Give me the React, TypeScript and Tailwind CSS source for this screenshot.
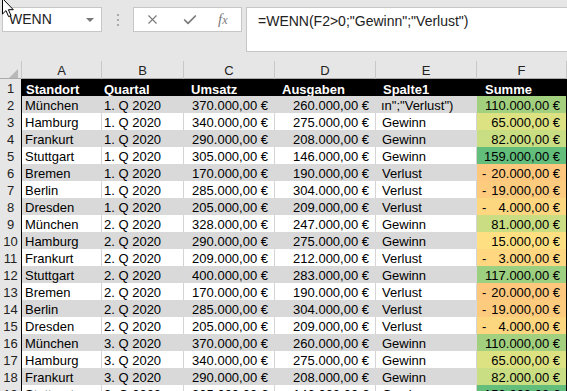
import React from "react";
import { X, Check } from "lucide-react";

type Row = {
  ort: string;
  q: string;
  umsatz: string;
  ausgaben: string;
  spalte: string;
  summe: string;
  neg?: boolean;
  color: string;
};

const rows: Row[] = [
  { ort: "München", q: "1. Q 2020", umsatz: "370.000,00 €", ausgaben: "260.000,00 €", spalte: "ın\";\"Verlust\")", summe: "110.000,00 €", color: "bg-[#a2d07f]" },
  { ort: "Hamburg", q: "1. Q 2020", umsatz: "340.000,00 €", ausgaben: "275.000,00 €", spalte: "Gewinn", summe: "65.000,00 €", color: "bg-[#dce182]" },
  { ort: "Frankurt", q: "1. Q 2020", umsatz: "290.000,00 €", ausgaben: "208.000,00 €", spalte: "Gewinn", summe: "82.000,00 €", color: "bg-[#c9dd82]" },
  { ort: "Stuttgart", q: "1. Q 2020", umsatz: "305.000,00 €", ausgaben: "146.000,00 €", spalte: "Gewinn", summe: "159.000,00 €", color: "bg-[#63be7b]" },
  { ort: "Bremen", q: "1. Q 2020", umsatz: "170.000,00 €", ausgaben: "190.000,00 €", spalte: "Verlust", summe: "20.000,00 €", neg: true, color: "bg-[#fdc87d]" },
  { ort: "Berlin", q: "1. Q 2020", umsatz: "285.000,00 €", ausgaben: "304.000,00 €", spalte: "Verlust", summe: "19.000,00 €", neg: true, color: "bg-[#fdcb7e]" },
  { ort: "Dresden", q: "1. Q 2020", umsatz: "205.000,00 €", ausgaben: "209.000,00 €", spalte: "Verlust", summe: "4.000,00 €", neg: true, color: "bg-[#fdd680]" },
  { ort: "München", q: "2. Q 2020", umsatz: "328.000,00 €", ausgaben: "247.000,00 €", spalte: "Gewinn", summe: "81.000,00 €", color: "bg-[#cadd82]" },
  { ort: "Hamburg", q: "2. Q 2020", umsatz: "290.000,00 €", ausgaben: "275.000,00 €", spalte: "Gewinn", summe: "15.000,00 €", color: "bg-[#fee082]" },
  { ort: "Frankurt", q: "2. Q 2020", umsatz: "209.000,00 €", ausgaben: "212.000,00 €", spalte: "Verlust", summe: "3.000,00 €", neg: true, color: "bg-[#fed780]" },
  { ort: "Stuttgart", q: "2. Q 2020", umsatz: "400.000,00 €", ausgaben: "283.000,00 €", spalte: "Gewinn", summe: "117.000,00 €", color: "bg-[#9ccf7f]" },
  { ort: "Bremen", q: "2. Q 2020", umsatz: "170.000,00 €", ausgaben: "190.000,00 €", spalte: "Verlust", summe: "20.000,00 €", neg: true, color: "bg-[#fdc87d]" },
  { ort: "Berlin", q: "2. Q 2020", umsatz: "285.000,00 €", ausgaben: "304.000,00 €", spalte: "Verlust", summe: "19.000,00 €", neg: true, color: "bg-[#fdcb7e]" },
  { ort: "Dresden", q: "2. Q 2020", umsatz: "205.000,00 €", ausgaben: "209.000,00 €", spalte: "Verlust", summe: "4.000,00 €", neg: true, color: "bg-[#fdd680]" },
  { ort: "München", q: "3. Q 2020", umsatz: "370.000,00 €", ausgaben: "260.000,00 €", spalte: "Gewinn", summe: "110.000,00 €", color: "bg-[#a2d07f]" },
  { ort: "Hamburg", q: "3. Q 2020", umsatz: "340.000,00 €", ausgaben: "275.000,00 €", spalte: "Gewinn", summe: "65.000,00 €", color: "bg-[#dce182]" },
  { ort: "Frankurt", q: "3. Q 2020", umsatz: "290.000,00 €", ausgaben: "208.000,00 €", spalte: "Gewinn", summe: "82.000,00 €", color: "bg-[#c9dd82]" },
  { ort: "Stuttgart", q: "3. Q 2020", umsatz: "305.000,00 €", ausgaben: "146.000,00 €", spalte: "Gewinn", summe: "159.000,00 €", color: "bg-[#63be7b]" },
];

const cols = "grid grid-cols-[22px_80px_82px_91px_101px_101px_90px]";

const App: React.FC = () => {
  return (
    <div className="relative w-[567px] h-[391px] overflow-hidden bg-white font-['Liberation_Sans',Arial,sans-serif] text-[13px] text-black">
      {/* Mouse cursor */}
      <svg className="absolute left-0 top-[-3px] z-10" width="16" height="22" viewBox="0 0 16 22">
        <path d="M2.5 1.5 L2.5 17 L6 13.6 L8.6 19.6 L11 18.6 L8.4 12.7 L13.3 12.7 Z" fill="#fff" stroke="#000" strokeWidth="1" strokeLinejoin="round" />
      </svg>

      {/* Formula bar */}
      <div className="h-[61px] bg-[#e6e6e6] flex items-start pt-[7px] pl-[2px]">
        <div className="w-[100px] h-[25px] bg-white border border-[#c6c6c6] flex items-center justify-between pl-[6px] pr-[7px] text-[14px] text-[#222]">
          <span>WENN</span>
          <span className="w-0 h-0 border-l-[4px] border-r-[4px] border-t-[4px] border-l-transparent border-r-transparent border-t-[#777]" />
        </div>
        <div className="w-[31px] h-[25px] flex flex-col items-center justify-center gap-[3px]">
          <span className="w-[2px] h-[2px] bg-[#a8a8a8]" />
          <span className="w-[2px] h-[2px] bg-[#a8a8a8]" />
          <span className="w-[2px] h-[2px] bg-[#a8a8a8]" />
        </div>
        <div className="w-[109px] h-[25px] bg-white border border-[#c6c6c6] flex items-center pl-[11px] gap-[22px] text-[#7a7a7a]">
          <X size={15} strokeWidth={1.8} />
          <Check size={16} strokeWidth={2.6} />
          <span className="font-['Liberation_Serif',serif] italic text-[15px] leading-none -ml-[2px]">
            f<span className="text-[12px]">x</span>
          </span>
        </div>
        <div className="ml-[4px] flex-1 h-[45px] bg-white border border-r-0 border-[#c6c6c6] pl-[11px] pt-[3px] text-[14px] text-[#222] whitespace-nowrap">
          =WENN(F2&gt;0;"Gewinn";"Verlust")
        </div>
      </div>

      {/* Column headers */}
      <div className={`${cols} h-[18px] bg-[#e6e6e6] border-b border-[#ababab] text-[#222]`}>
        <div className="flex items-end justify-end pr-[3px] pb-[3px] border-r border-[#c8c8c8]">
          <svg width="9" height="9" viewBox="0 0 9 9">
            <path d="M9 0 L9 9 L0 9 Z" fill="#b8b8b8" />
          </svg>
        </div>
        {["A", "B", "C", "D", "E", "F"].map((c) => (
          <div key={c} className="flex items-center justify-center border-r border-[#c8c8c8]">
            {c}
          </div>
        ))}
      </div>

      {/* Header row */}
      <div className={`${cols} h-[17px]`}>
        <div className="flex items-center justify-center bg-[#e6e6e6] border-b border-r border-b-[#d0d0d0] border-r-black text-[#222]">1</div>
        <div className="bg-black text-white font-bold flex items-center pl-[4px]">Standort</div>
        <div className="bg-black text-white font-bold flex items-center pl-[2px]">Quartal</div>
        <div className="bg-black text-white font-bold flex items-center pl-[7px]">Umsatz</div>
        <div className="bg-black text-white font-bold flex items-center pl-[7px]">Ausgaben</div>
        <div className="bg-black text-white font-bold flex items-center pl-[7px]">Spalte1</div>
        <div className="bg-black text-white font-bold flex items-center pl-[8px]">Summe</div>
      </div>

      {/* Data rows */}
      {rows.map((r, i) => {
        const n = i + 2;
        const gray = n % 2 === 0;
        const fill = gray ? "bg-[#d9d9d9] border-r-[#d9d9d9]" : "bg-white border-r-[#d4d4d4]";
        return (
          <div key={n} className={`${cols} h-[17px]`}>
            <div className="flex items-center justify-center bg-[#e6e6e6] border-b border-r border-b-[#d0d0d0] border-r-black text-[#222]">
              {n}
            </div>
            <div className={`${fill} border-r border-b border-b-black flex items-center pl-[3px] whitespace-nowrap`}>{r.ort}</div>
            <div className={`${fill} border-r border-b border-b-black flex items-center pl-[2px] whitespace-nowrap`}>{r.q}</div>
            <div className={`${fill} border-r border-b border-b-black flex items-center justify-end pr-[6px] whitespace-nowrap`}>{r.umsatz}</div>
            <div className={`${fill} border-r border-b border-b-black flex items-center justify-end pr-[6px] whitespace-nowrap`}>{r.ausgaben}</div>
            <div className={`${fill} border-r border-b border-b-black flex items-center ${n === 2 ? "pl-[5px]" : "pl-[6px]"} whitespace-nowrap`}>
              {r.spalte}
            </div>
            <div className={`${r.color} border-b border-b-black border-r border-r-black flex items-center justify-between pl-[5px] pr-[6px] whitespace-nowrap`}>
              <span>{r.neg ? "-" : ""}</span>
              <span>{r.summe}</span>
            </div>
          </div>
        );
      })}
    </div>
  );
};

export default App;
